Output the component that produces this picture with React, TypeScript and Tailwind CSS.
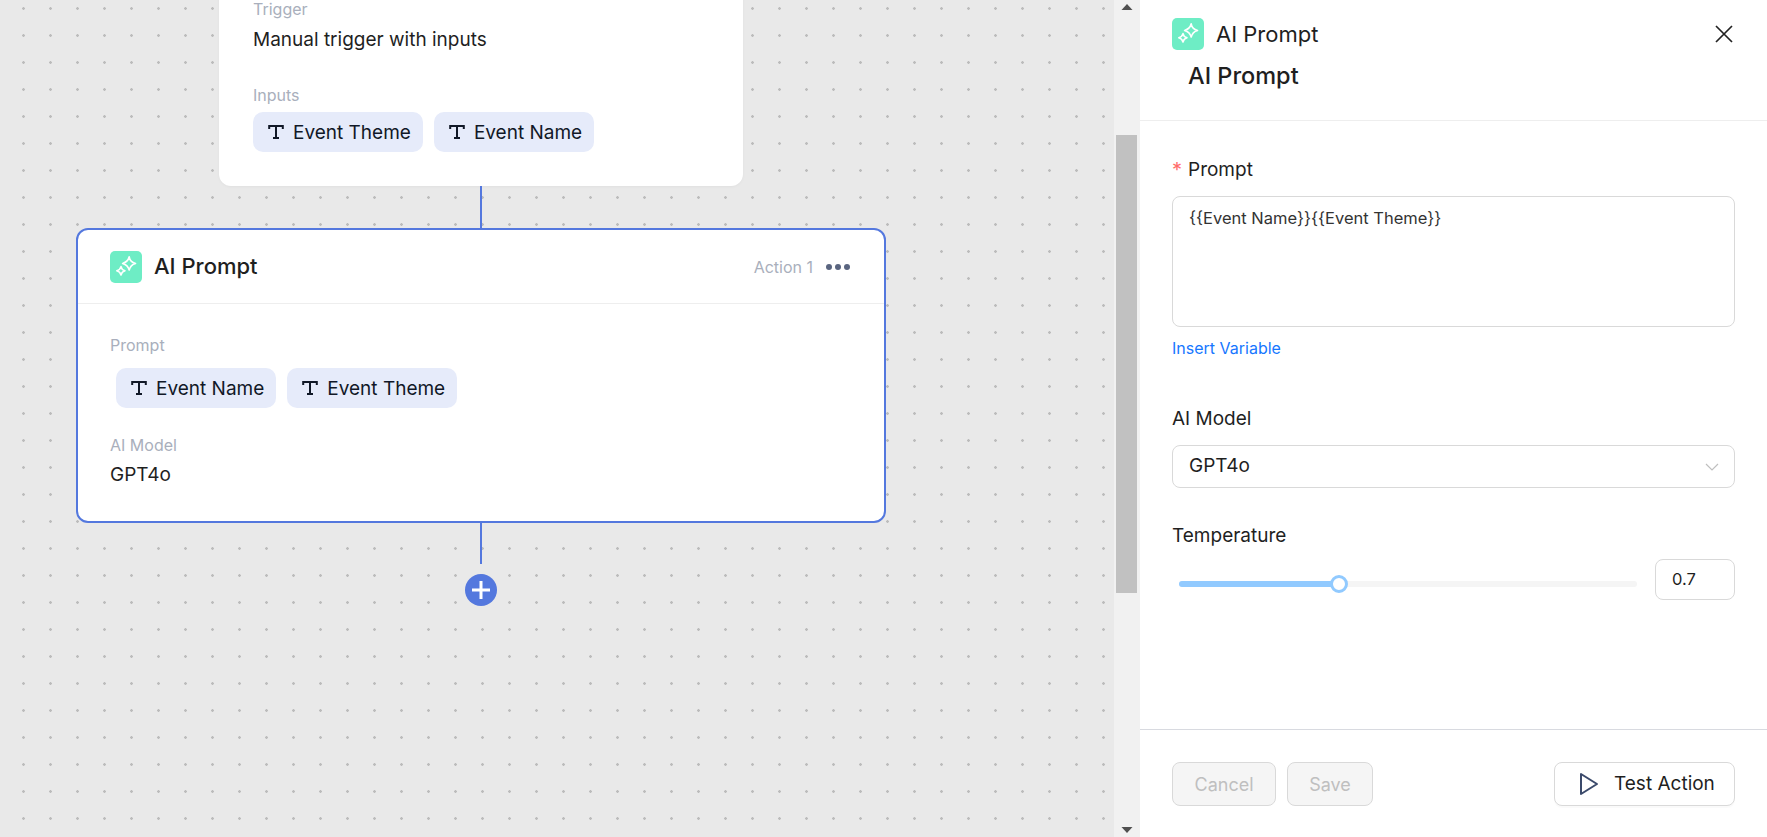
import React from "react";

function SlabT() {
  return (
    <svg width="16" height="16" viewBox="0 0 16 16" fill="none" stroke="currentColor" strokeWidth="2" className="shrink-0">
      <path d="M1.200 5V2h13.600v3M8 2v12M5 14h6" />
    </svg>
  );
}

function Chip({ label }: { label: string }) {
  return (
    <span className="inline-flex h-10 items-center gap-[9px] rounded-[10px] bg-[#e6ebfa] pl-[15px] pr-3 text-[19px] leading-none text-[#111827]">
      <SlabT />
      {label}
    </span>
  );
}

function AiIcon() {
  return (
    <span className="flex h-8 w-8 shrink-0 items-center justify-center rounded-[5px] bg-[#6eedc5]">
      <svg width="32" height="32" viewBox="0 0 32 32" fill="none" stroke="#fff" strokeWidth="1.6" strokeLinejoin="round">
        <path d="M19.2 5.8c.5 3.4 2.6 5.6 6.4 6.6-3.6 1-5.6 3-6.4 6.6-.9-3.6-3-5.6-6.6-6.6 3.6-1 5.8-3.2 6.6-6.6Z" />
        <path d="M11 15.600c.3 2 1.600 3.400 4 4.200-2.300.7-3.500 2-4 4.200-.6-2.200-1.900-3.500-4.200-4.200 2.300-.8 3.700-2.200 4.200-4.200Z" />
      </svg>
    </span>
  );
}

export default function App() {
  return (
    <div className="flex h-[837px] w-[1767px] overflow-hidden bg-white font-['Inter',sans-serif] text-[#1f1f1f]">
      {/* canvas */}
      <main className="flex w-[1114px] shrink-0 flex-col overflow-hidden bg-[#e9e9e9] bg-[radial-gradient(circle_at_23.5px_8.5px,#bcbcbc_0,#bcbcbc_1px,transparent_1.6px)] bg-[size:27px_27px] pl-[76px]">
        <section className="ml-[143px] -mt-[20px] h-[206px] w-[524px] shrink-0 rounded-b-[12px] bg-white pl-[34px] pt-[17px] shadow-[0_1px_3px_rgba(0,0,0,0.04)]">
          <p className="text-[16px] leading-6 text-[#a9afbc]">Trigger</p>
          <p className="mt-[7px] text-[19px] leading-6">Manual trigger with inputs</p>
          <p className="mt-[31px] text-[16px] leading-6 text-[#a9afbc]">Inputs</p>
          <div className="mt-[5px] flex gap-[11px]">
            <Chip label="Event Theme" />
            <Chip label="Event Name" />
          </div>
        </section>

        <div className="ml-[404px] h-[42px] w-[2px] shrink-0 bg-[#5478de]" />

        <section className="h-[295px] w-[810px] shrink-0 rounded-[12px] border-2 border-[#5478de] bg-white">
          <header className="flex h-[74px] items-center border-b border-[#eeeeee] pl-[32px] pr-[34px]">
            <AiIcon />
            <h2 className="mb-[2px] ml-3 text-[22px] font-medium leading-none">AI Prompt</h2>
            <span className="ml-auto text-[16px] leading-none text-[#a9afbc]">Action 1</span>
            <span className="ml-[13px] flex items-center gap-[3px]">
              <i className="h-[6px] w-[6px] rounded-full bg-[#5a6580]" />
              <i className="h-[6px] w-[6px] rounded-full bg-[#5a6580]" />
              <i className="h-[6px] w-[6px] rounded-full bg-[#5a6580]" />
            </span>
          </header>
          <div className="pl-[32px] pt-[29px]">
            <p className="text-[16px] leading-6 text-[#a9afbc]">Prompt</p>
            <div className="ml-[6px] mt-[11px] flex gap-[11px]">
              <Chip label="Event Name" />
              <Chip label="Event Theme" />
            </div>
            <p className="mt-[25px] text-[16px] leading-6 text-[#a9afbc]">AI Model</p>
            <p className="mt-[6px] text-[19px] leading-6">GPT4o</p>
          </div>
        </section>

        <div className="ml-[404px] h-[41px] w-[2px] shrink-0 bg-[#5478de]" />
        <div className="ml-[389px] mt-[10px] flex h-8 w-8 shrink-0 items-center justify-center rounded-full bg-[#5478de]">
          <svg width="20" height="20" viewBox="0 0 20 20" fill="none" stroke="#fff" strokeWidth="3">
            <path d="M10 1v18M1 10h18" />
          </svg>
        </div>
      </main>

      {/* scrollbar */}
      <div className="flex w-[26px] shrink-0 flex-col items-center bg-[#f1f1f1]">
        <svg width="12" height="16" viewBox="0 0 12 16" className="shrink-0" fill="#505050"><path d="M6 4l5.500 6H.5z" /></svg>
        <div className="ml-[-2px] mt-[119px] h-[458px] w-[21px] shrink-0 bg-[#c1c1c1]" />
        <svg width="12" height="16" viewBox="0 0 12 16" className="mt-auto shrink-0" fill="#505050"><path d="M6 12L.5 6h11z" /></svg>
      </div>

      {/* panel */}
      <aside className="flex min-w-0 flex-1 flex-col bg-white">
        <header className="h-[121px] shrink-0 border-b border-[#eeeeee] pl-8 pt-[18px]">
          <div className="flex items-center">
            <AiIcon />
            <span className="ml-3 text-[22px] leading-none">AI Prompt</span>
            <button className="ml-auto mr-[34px] flex h-[18px] w-[18px] items-center justify-center">
              <svg width="18" height="18" viewBox="0 0 18 18" fill="none" stroke="#222" strokeWidth="1.7"><path d="M1 1l16 16M17 1L1 17" /></svg>
            </button>
          </div>
          <h1 className="ml-4 mt-[11px] text-[23.500px] font-medium leading-[30px]">AI Prompt</h1>
        </header>

        <div className="flex-1 pl-8 pr-8">
          <label className="mt-[37px] flex items-center text-[19px] leading-6">
            <span className="w-4 text-[20px] text-[#ff6b6b]">*</span>Prompt
          </label>
          <textarea
            readOnly
            defaultValue="{{Event Name}}{{Event Theme}}"
            className="mt-[14px] block h-[131px] w-full resize-none rounded-lg border border-[#d9d9d9] bg-white px-4 py-[9px] text-[16.500px] leading-6 text-[#333] outline-none"
          />
          <p className="mt-[9px] text-[16px] leading-6 text-[#1677ff]">Insert Variable</p>

          <label className="mt-[47px] block text-[19px] leading-6">AI Model</label>
          <div className="mt-[14px] flex h-[43px] items-center justify-between rounded-lg border border-[#d9d9d9] pl-4 pr-[14px] text-[19px]">
            GPT4o
            <svg width="16" height="16" viewBox="0 0 16 16" fill="none" stroke="#bfbfbf" strokeWidth="1.200"><path d="M2 5l6 6 6-6" /></svg>
          </div>

          <label className="mt-[36px] block text-[19px] leading-6">Temperature</label>
          <div className="mt-[11px] flex items-center">
            <div className="relative ml-[7px] mt-[9px] h-[6px] w-[458px] rounded-full bg-[#f5f5f5]">
              <div className="h-full w-[160px] rounded-full bg-[#91caff]" />
              <span className="absolute left-[151px] top-[-6px] h-[18px] w-[18px] rounded-full border-[3px] border-[#91caff] bg-white" />
            </div>
            <div className="ml-auto flex h-[41px] w-[80px] items-center rounded-lg border border-[#d9d9d9] pl-4 text-[16.500px]">0.7</div>
          </div>
        </div>

        <footer className="flex h-[108px] shrink-0 items-start border-t border-[#d8dae0] pl-8 pr-8 pt-[32px] text-[18px]">
          <button className="h-[44px] w-[104px] rounded-lg border border-[#d9d9d9] bg-[#f5f5f5] text-[#bfbfbf]">Cancel</button>
          <button className="ml-[11px] h-[44px] w-[86px] rounded-lg border border-[#d9d9d9] bg-[#f5f5f5] text-[#bfbfbf]">Save</button>
          <button className="ml-auto flex h-[44px] w-[181px] items-center rounded-lg border border-[#d9d9d9] bg-white pl-6 shadow-[0_2px_0_rgba(0,0,0,0.02)]">
            <svg width="20" height="24" viewBox="0 0 20 24" fill="none" stroke="#3b4a6b" strokeWidth="2" strokeLinejoin="round"><path d="M2 2v20l16-10z" /></svg>
            <span className="ml-[15px] text-[19px]">Test Action</span>
          </button>
        </footer>
      </aside>
    </div>
  );
}
